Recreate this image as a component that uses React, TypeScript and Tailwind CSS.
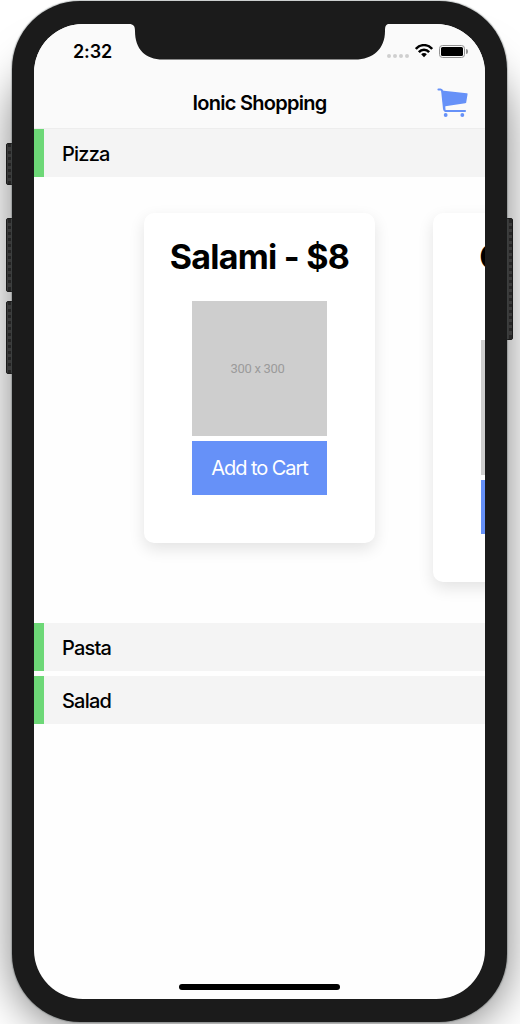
import type { ReactNode } from "react";

function CartIcon() {
  return (
    <svg viewBox="0 0 93 90" className="h-[30px] w-[31px]" fill="#6691f8">
      <path
        d="M4.500 4.500h6c3 0 4.500 2 5.200 5l5.600 53c.5 4 3 6.500 7 6.500H84"
        fill="none"
        stroke="#6691f8"
        strokeWidth="6.500"
        strokeLinecap="round"
        strokeLinejoin="round"
      />
      <path d="M14 7.500L89 16c2 .3 3 1 2.700 3l-4 24c-.3 2-1 2.500-3 2.800L25 55v8l-5-1z" />
      <circle cx="26" cy="81" r="5.800" />
      <circle cx="76" cy="81" r="5.800" />
    </svg>
  );
}

function WifiIcon() {
  return (
    <svg viewBox="0 0 54 40" className="h-[13.3px] w-[18px]">
      <g fill="none" stroke="#000" strokeWidth="7.500">
        <path d="M2.500 15C16-0.500 38-0.500 51.500 15" />
        <path d="M11.500 24.500C20 15 34 15 42.500 24.500" />
      </g>
      <path d="M18.500 31c5-5 12-5 17 0L27 39.500z" />
    </svg>
  );
}

function StatusBar() {
  return (
    <div className="flex h-[54px] justify-between pl-[39px] pr-[17px]">
      <span className="mt-[16px] text-[18px] font-semibold leading-[24px] tracking-[-0.1px]">2:32</span>
      <div className="mt-[20px] flex h-[14px] items-center">
        <div className="mr-[6px] flex gap-[2px] pt-[9px]">
          <i className="size-[4px] rounded-full bg-[#cfcfcf]" />
          <i className="size-[4px] rounded-full bg-[#cfcfcf]" />
          <i className="size-[4px] rounded-full bg-[#cfcfcf]" />
          <i className="size-[4px] rounded-full bg-[#cfcfcf]" />
        </div>
        <WifiIcon />
        <div className="ml-[6px] h-[13px] w-[26px] rounded-[3.500px] border border-[#929292] p-[1px]">
          <div className="h-full rounded-[1.500px] bg-black" />
        </div>
        <div className="ml-[1px] h-[5px] w-[2px] rounded-r-full bg-[#929292]" />
      </div>
    </div>
  );
}

function Category({ name }: { name: string }) {
  return (
    <div className="flex h-12 shrink-0 items-center border-l-10 border-[#6dd877] bg-[#f4f4f4] pl-[18px] pt-px text-[20px] font-medium tracking-[-0.8px]">
      {name}
    </div>
  );
}

function ProductCard({ title }: { title: ReactNode }) {
  return (
    <div className="flex w-[231px] shrink-0 flex-col items-center rounded-[10px] bg-white px-4 pt-[24px] pb-[48px] shadow-[0_6px_16px_rgba(0,0,0,0.11)]">
      <h1 className="text-center text-[34px] font-bold leading-[39.500px] tracking-[-0.75px] whitespace-nowrap">{title}</h1>
      <div className="mt-[24px] flex size-[135px] items-center justify-center bg-[#cecece] pr-1 pt-[2px] [font-family:Roboto,sans-serif]">
        <span className="text-[13px] tracking-[-0.3px] text-[#9b9b9b]">300 x 300</span>
      </div>
      <button className="mt-[5px] h-[54px] w-[135px] bg-[#6691f8] text-[20px] font-normal tracking-[-1.05px] whitespace-nowrap text-white">
        Add to Cart
      </button>
    </div>
  );
}

function SideButton({ className, gripClass }: { className: string; gripClass: string }) {
  return (
    <div className={`absolute w-[8px] rounded-[2px] border border-[#1b1b1b] bg-[#3a3a3a] ${className}`}>
      <div className={`h-full w-0 border-l-3 border-dotted border-[#252525] ${gripClass}`} />
    </div>
  );
}

export default function App() {
  return (
    <div className="relative h-[1024px] w-[520px] overflow-hidden bg-white pl-3 pt-px text-black [font-family:Inter,sans-serif]">
      <div className="absolute left-[12px] top-[40px] h-[970px] w-[495px] rounded-[68px] shadow-[0_18px_44px_rgba(0,0,0,0.5)]" />
      <SideButton className="left-[6px] top-[143px] h-[42px]" gripClass="ml-[1px]" />
      <SideButton className="left-[6px] top-[218px] h-[74px]" gripClass="ml-[1px]" />
      <SideButton className="left-[6px] top-[301px] h-[73px]" gripClass="ml-[1px]" />
      <SideButton className="left-[505px] top-[218px] h-[122px]" gripClass="ml-[3px]" />

      <div className="relative h-[1021px] w-[495px] rounded-[68px] bg-[#1b1b1b] px-[22px] pt-[23px] pb-[23px] shadow-[0_0_1px_1px_rgba(70,80,80,0.3)]">
        <main className="relative flex h-[975px] w-[451px] flex-col overflow-hidden rounded-[49px] bg-[#fefefe]">
          <header className="h-[105px] shrink-0 border-b border-[#ededed] bg-[#fafafa]">
            <StatusBar />
            <div className="flex h-[50px] items-center justify-between pl-[48px] pr-[17px]">
              <h2 className="grow text-center text-[20px] font-semibold tracking-[-0.72px]">Ionic Shopping</h2>
              <CartIcon />
            </div>
          </header>
          <Category name="Pizza" />
          <section className="flex h-[446px] shrink-0 items-start gap-[58px] overflow-hidden pl-[110px] pt-[36px]">
            <ProductCard title="Salami - $8" />
            <ProductCard title={<>Classic -<br />$5</>} />
          </section>
          <Category name="Pasta" />
          <div className="h-[5px] shrink-0" />
          <Category name="Salad" />
          <div className="absolute bottom-[9px] left-[145px] h-[6px] w-[161px] rounded-full bg-black" />
          <svg viewBox="0 0 260 36" className="absolute left-[95px] top-0 h-[36px] w-[260px]" fill="#1b1b1b">
            <path d="M0 0C4.500 0 6 2 6 7C6 25 16 35.500 34 35.500H226C244 35.500 256 25 256 7C256 2 257 0 260 0Z" />
          </svg>
        </main>
      </div>
    </div>
  );
}
